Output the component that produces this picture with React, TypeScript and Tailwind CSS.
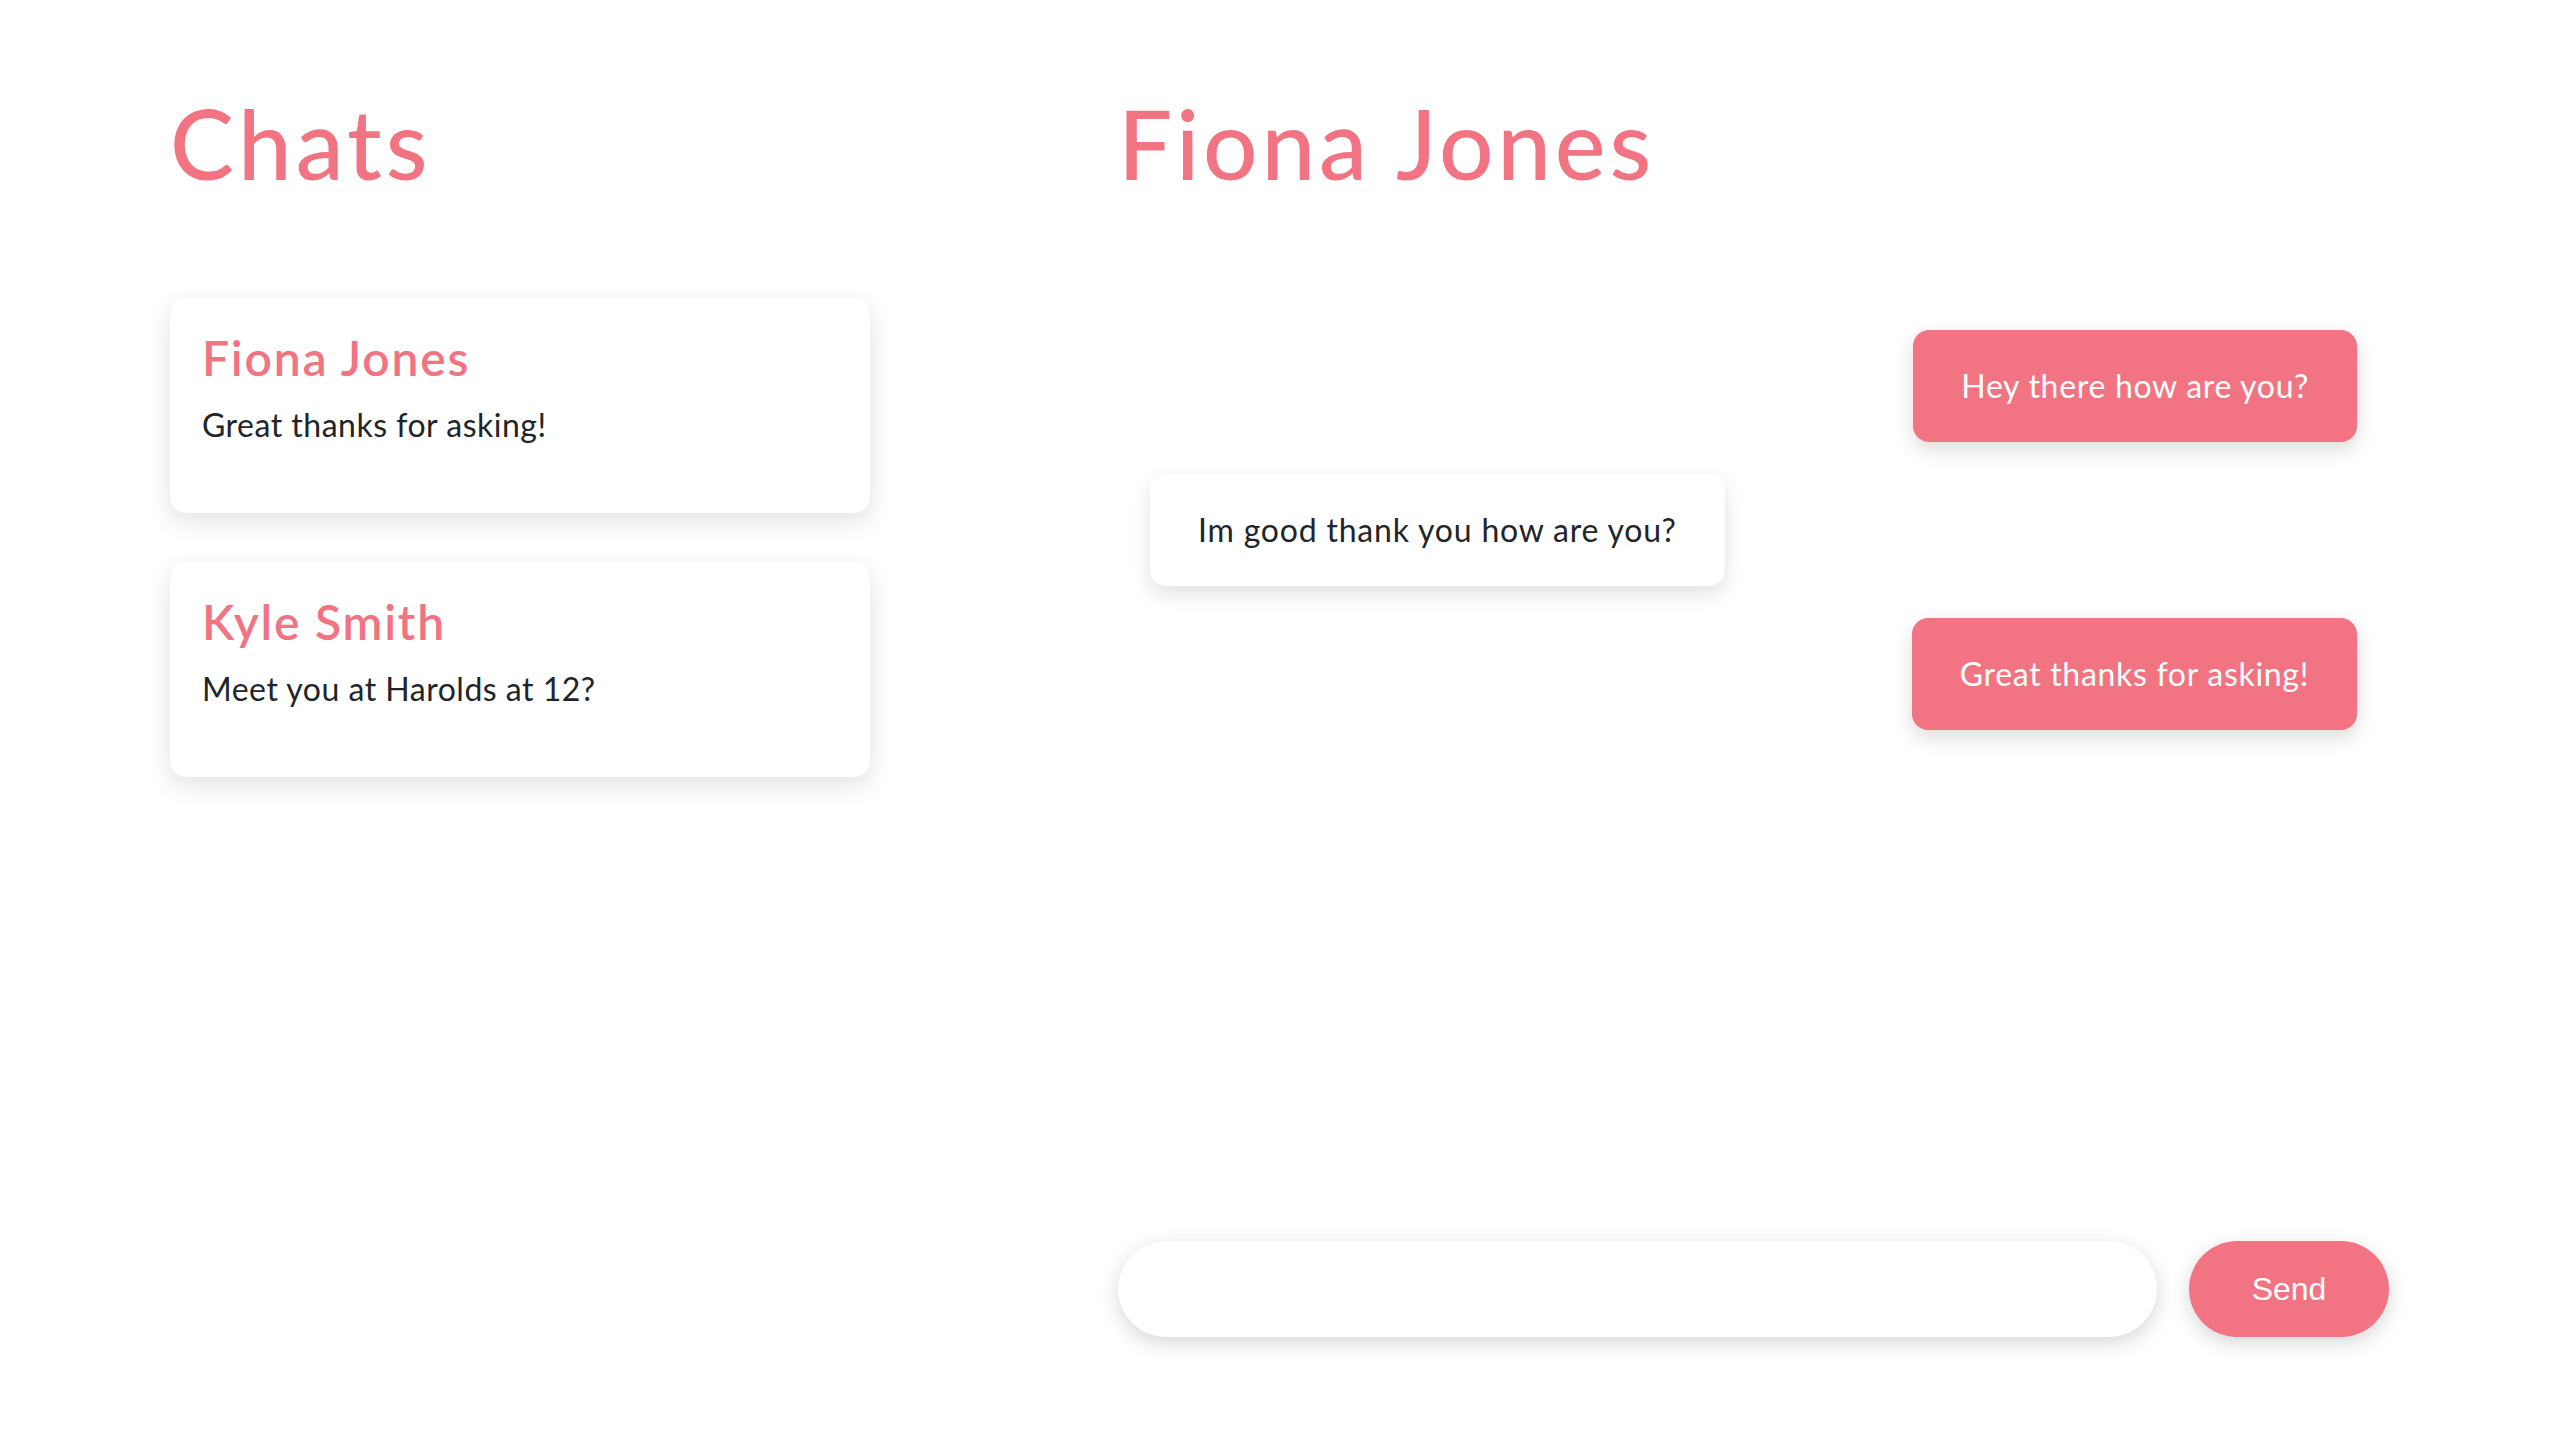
import { useState } from 'react';

const chats = [
  { name: 'Fiona Jones', last: 'Great thanks for asking!' },
  { name: 'Kyle Smith', last: 'Meet you at Harolds at 12?' },
];

const messages = [
  { text: 'Hey there how are you?', mine: true },
  { text: 'Im good thank you how are you?', mine: false },
  { text: 'Great thanks for asking!', mine: true },
];

export default function App() {
  const [draft, setDraft] = useState('');

  return (
    <div className="flex h-screen gap-[248px] bg-white pb-[97px] pl-[170px] pr-[171px] pt-[95px] font-['Lato','Noto_Sans',sans-serif] text-[#212529]">
      <aside className="flex w-[700px] shrink-0 flex-col">
        <h1 className="text-[96px] font-medium leading-[96px] tracking-[4px] text-[#f27482]">Chats</h1>
        <div className="mt-[107px] flex flex-col gap-[49px]">
          {chats.map((c) => (
            <div
              key={c.name}
              className="h-[215px] rounded-2xl bg-white px-8 pt-[36px] shadow-[0_8px_24px_rgba(0,0,0,0.12)]"
            >
              <h2 className="text-[48px] font-semibold leading-[48px] tracking-[1.8px] text-[#f27482]">{c.name}</h2>
              <p className="mt-[27px] text-[32px] leading-[32px] tracking-[0.5px]">{c.last}</p>
            </div>
          ))}
        </div>
      </aside>

      <main className="flex flex-1 flex-col">
        <h1 className="text-[96px] font-medium leading-[96px] tracking-[3.8px] text-[#f27482]">Fiona Jones</h1>
        <div className="mt-[107px] flex flex-1 flex-col gap-8 p-8">
          {messages.map((m, i) => (
            <div
              key={i}
              className={
                m.mine
                  ? 'self-end rounded-2xl bg-[#f27482] px-12 py-10 text-[32px] leading-8 tracking-[0.7px] text-white shadow-[0_8px_20px_rgba(0,0,0,0.14)]'
                  : 'self-start rounded-2xl bg-white px-12 py-10 text-[32px] leading-8 tracking-[0.8px] text-[#212529] shadow-[0_8px_20px_rgba(0,0,0,0.12)]'
              }
            >
              {m.text}
            </div>
          ))}
        </div>
        <form
          className="flex gap-8"
          onSubmit={(e) => {
            e.preventDefault();
            setDraft('');
          }}
        >
          <input
            value={draft}
            onChange={(e) => setDraft(e.target.value)}
            className="h-24 flex-1 rounded-full bg-white px-10 text-[32px] shadow-[0_6px_20px_rgba(0,0,0,0.16)] outline-none"
          />
          <button
            type="submit"
            className="h-24 w-[200px] rounded-full bg-[#f27482] font-['Liberation_Sans',Arial,sans-serif] text-[32px] text-white shadow-[0_6px_20px_rgba(0,0,0,0.16)]"
          >
            Send
          </button>
        </form>
      </main>
    </div>
  );
}
